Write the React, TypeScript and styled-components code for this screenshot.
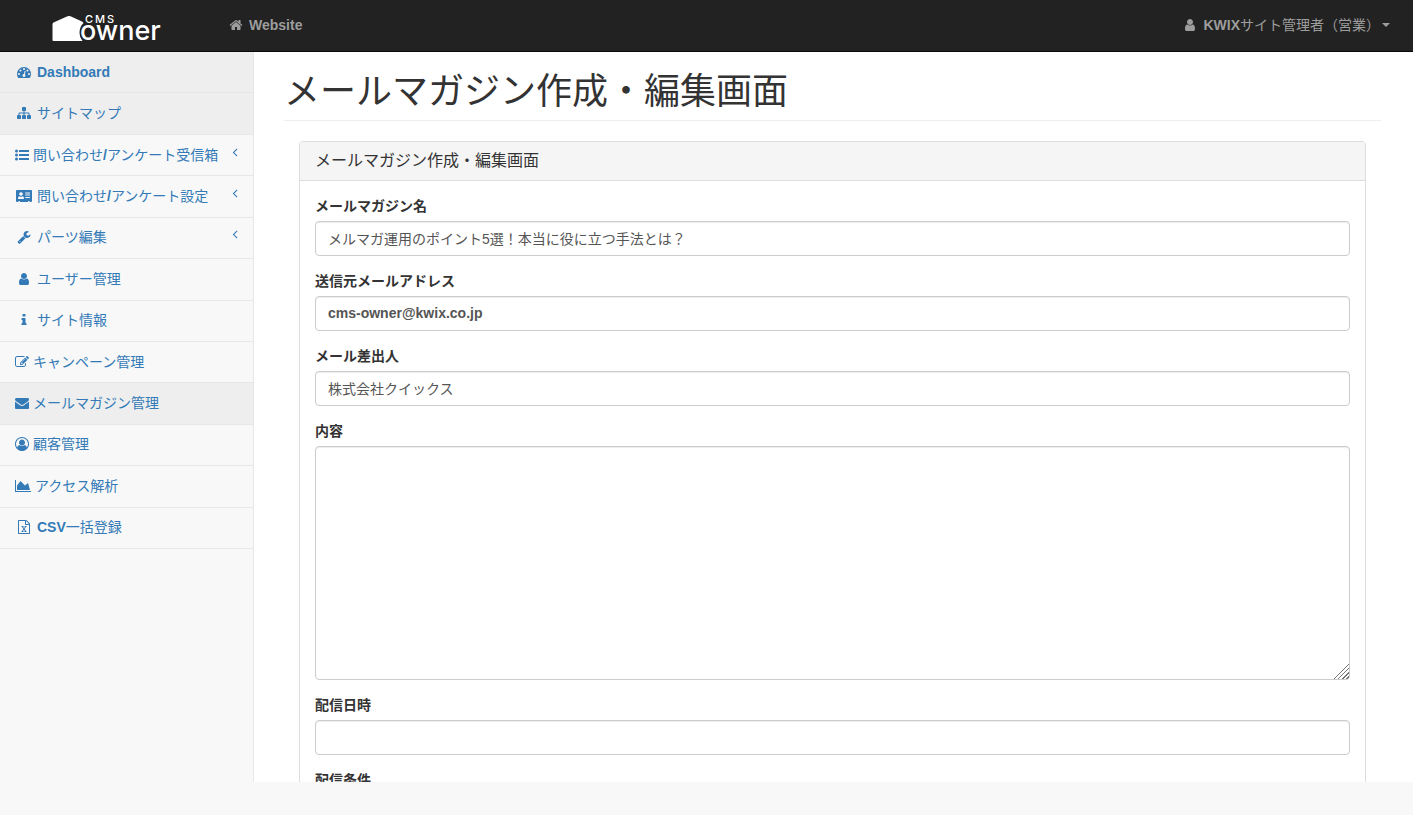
import React from "react";
import styled, { createGlobalStyle } from "styled-components";

const GlobalStyle = createGlobalStyle`
  *, *::before, *::after { box-sizing: border-box; }
  body {
    margin: 0;
    background: #f8f8f8;
    color: #333;
    font-family: "Liberation Sans", "Noto Sans CJK JP", sans-serif;
    font-size: 14px;
    line-height: 20px;
  }
  a { text-decoration: none; }
`;

const paths = {
  home: "M1472 992v480q0 26-19 45t-45 19h-384v-384h-256v384h-384q-26 0-45-19t-19-45v-480q0-1 .5-3t.5-3l575-474 575 474q1 2 1 6zm223-69l-62 74q-8 9-21 11h-3q-13 0-21-7l-692-577-692 577q-12 8-24 7-13-2-21-11l-62-74q-8-10-7-23.5t11-21.5l719-599q32-26 76-26t76 26l244 204v-195q0-14 9-23t23-9h192q14 0 23 9t9 23v408l219 182q10 8 11 21.5t-7 23.5z",
  user: "M1536 1399q0 109-62.5 187t-150.5 78h-854q-88 0-150.5-78t-62.5-187q0-85 8.5-160.5t31.5-152 58.5-131 94-89 134.5-34.5q131 128 313 128t313-128q76 0 134.5 34.5t94 89 58.5 131 31.5 152 8.5 160.5zm-256-887q0 159-112.5 271.5t-271.5 112.5-271.5-112.5-112.5-271.5 112.5-271.5 271.5-112.5 271.5 112.5 112.5 271.5z",
  gauge: "M384 1152q0-53-37.5-90.5t-90.5-37.5-90.5 37.5-37.5 90.5 37.5 90.5 90.5 37.5 90.5-37.5 37.5-90.5zm192-448q0-53-37.5-90.5t-90.5-37.5-90.5 37.5-37.5 90.5 37.5 90.5 90.5 37.5 90.5-37.5 37.5-90.5zm428 481l101-382q6-26-7.5-48.5t-38.5-29.5-48 6.5-30 39.5l-101 382q-60 5-107 43.5t-63 98.5q-20 77 20 146t117 89 146-20 89-117q16-60-6-117t-72-91zm660-33q0-53-37.5-90.5t-90.5-37.5-90.5 37.5-37.5 90.5 37.5 90.5 90.5 37.5 90.5-37.5 37.5-90.5zm-640-640q0-53-37.5-90.5t-90.5-37.5-90.5 37.5-37.5 90.5 37.5 90.5 90.5 37.5 90.5-37.5 37.5-90.5zm448 192q0-53-37.5-90.5t-90.5-37.5-90.5 37.5-37.5 90.5 37.5 90.5 90.5 37.5 90.5-37.5 37.5-90.5zm320 448q0 261-141 483-19 29-54 29h-1402q-35 0-54-29-141-221-141-483 0-182 71-348t191-286 286-191 348-71 348 71 286 191 191 286 71 348z",
  sitemap: "M1792 1248v320q0 40-28 68t-68 28h-320q-40 0-68-28t-28-68v-320q0-40 28-68t68-28h96v-192h-512v192h96q40 0 68 28t28 68v320q0 40-28 68t-68 28h-320q-40 0-68-28t-28-68v-320q0-40 28-68t68-28h96v-192h-512v192h96q40 0 68 28t28 68v320q0 40-28 68t-68 28h-320q-40 0-68-28t-28-68v-320q0-40 28-68t68-28h96v-192q0-52 38-90t90-38h512v-192h-96q-40 0-68-28t-28-68v-320q0-40 28-68t68-28h320q40 0 68 28t28 68v320q0 40-28 68t-68 28h-96v192h512q52 0 90 38t38 90v192h96q40 0 68 28t28 68z",
  list: "M0 384a192 192 0 1 0 384 0a192 192 0 1 0-384 0zM0 896a192 192 0 1 0 384 0a192 192 0 1 0-384 0zM0 1408a192 192 0 1 0 384 0a192 192 0 1 0-384 0zM512 288q0-32 32-32h1216q32 0 32 32v192q0 32-32 32h-1216q-32 0-32-32zM512 800q0-32 32-32h1216q32 0 32 32v192q0 32-32 32h-1216q-32 0-32-32zM512 1312q0-32 32-32h1216q32 0 32 32v192q0 32-32 32h-1216q-32 0-32-32z",
  card: "M0 256q0-128 112-128h1824q112 0 112 128v1280q0 128-112 128h-208v-96q0-32-32-32h-128q-32 0-32 32v96h-1024v-96q0-32-32-32h-128q-32 0-32 32v96h-208q-112 0-112-128zM256 1216q0 64 64 64h640q64 0 64-64 0-300-190-300-80 76-194 76t-194-76q-190 0-190 300zM640 400a232 232 0 1 0 1 0zM1184 448v128h608v-128zM1184 704v128h608v-128zM1184 1024v128h608v-128z",
  wrench: "M448 1472q0-26-19-45t-45-19-45 19-19 45 19 45 45 19 45-19 19-45zm644-420l-682 682q-37 37-90 37-52 0-91-37l-106-108q-38-36-38-90 0-53 38-91l681-681q39 98 114.5 173.5t173.5 114.5zm634-435q0 39-23 106-47 134-164.5 217.5t-258.5 83.5q-185 0-316.5-131.5t-131.5-316.5 131.5-316.5 316.5-131.5q58 0 121.5 16.5t107.5 46.5q16 11 16 28t-16 28l-293 169v224l193 107q5-3 79-48.5t135.5-81 70.5-35.5q15 0 23.5 10t8.5 25z",
  info: "M1216 1344v128q0 26-19 45t-45 19h-512q-26 0-45-19t-19-45v-128q0-26 19-45t45-19h64v-384h-64q-26 0-45-19t-19-45v-128q0-26 19-45t45-19h384q26 0 45 19t19 45v576h64q26 0 45 19t19 45zm-128-1152v192q0 26-19 45t-45 19h-256q-26 0-45-19t-19-45v-192q0-26 19-45t45-19h256q26 0 45 19t19 45z",
  edit: "M888 1184l116-116-152-152-116 116v56h96v96h56zm440-720q-16-16-33 1l-350 350q-17 17-1 33t33-1l350-350q17-17 1-33zm80 594v190q0 119-84.5 203.5t-203.5 84.5h-832q-119 0-203.5-84.5t-84.5-203.5v-832q0-119 84.5-203.5t203.5-84.5h832q63 0 117 25 15 7 18 23 3 17-9 29l-49 49q-14 14-32 8-23-6-45-6h-832q-66 0-113 47t-47 113v832q0 66 47 113t113 47h832q66 0 113-47t47-113v-126q0-13 9-22l64-64q15-15 35-7t20 29zm-96-738l288 288-672 672h-288v-288zm444 132l-92 92-288-288 92-92q28-28 68-28t68 28l152 152q28 28 28 68t-28 68z",
  envelope: "M1792 710v794q0 66-47 113t-113 47h-1472q-66 0-113-47t-47-113v-794q44 49 101 87 362 246 497 345 57 42 92.5 65.5t94.5 48 110 24.5h2q51 0 110-24.5t94.5-48 92.5-65.5q170-123 498-345 57-39 100-87zm0-294q0 79-49 151t-122 123q-376 261-468 325-10 7-42.5 30.5t-54 38-52 32.5-57.5 27-50 9h-2q-23 0-50-9t-57.5-27-52-32.5-54-38-42.5-30.5q-91-64-262-182.5t-205-142.5q-62-42-117-115.5t-55-136.5q0-78 41.5-130t118.5-52h1472q65 0 112.5 47t47.5 113z",
  userCircle: "M896 0q182 0 348 71t286 191 191 286 71 348q0 181-70.5 347t-190.5 286-286 191.5-349 71.5-349-71-285.5-191.5-190.5-286-71-347.5 71-348 191-286 286-191 348-71zm619 1351q149-205 149-455 0-156-61-298t-164-245-245-164-298-61-298 61-245 164-164 245-61 298q0 250 149 455 66-327 306-327 131 128 313 128t313-128q240 0 306 327zm-235-647q0-159-112.5-271.5t-271.5-112.5-271.5 112.5-112.5 271.5 112.5 271.5 271.5 112.5 271.5-112.5 112.5-271.5z",
  chart: "M2048 1536v128h-2048v-1536h128v1408h1920zm-384-1024l256 896h-1664v-576l448-576 576 576z",
  excel: "M1596 380q28 28 48 76t20 88v1152q0 40-28 68t-68 28h-1344q-40 0-68-28t-28-68v-1600q0-40 28-68t68-28h896q40 0 88 20t76 48zm-444-244v376h376q-10-29-22-41l-313-313q-12-12-41-22zm384 1528v-1024h-416q-40 0-68-28t-28-68v-416h-768v1536h1280zm-979-234v106h281v-106h-75l103-161q5-7 10-16.5t7.5-13.5 3.5-4h2q1 4 5 10 2 4 4.5 7.5t6 8 6.5 8.5l107 161h-76v106h291v-106h-68l-192-273 195-282h67v-107h-279v107h74l-103 159q-4 7-10 16.5t-9 13.5l-2 3h-2q-1-4-5-10-6-11-17-23l-106-159h76v-107h-290v107h68l189 272-194 283h-68z",
  angleLeft: "M1203 544q0 13-10 23l-393 393 393 393q10 10 10 23t-10 23l-50 50q-10 10-23 10t-23-10l-466-466q-10-10-10-23t10-23l466-466q10-10 23-10t23 10l50 50q10 10 10 23z",
};

type IconName = keyof typeof paths;

const IconBox = styled.span<{ $fixed?: boolean }>`
  display: inline-flex;
  flex: none;
  justify-content: center;
  width: ${(p) => (p.$fixed ? "18px" : "auto")};
`;

const Glyph = styled.svg`
  display: block;
  height: 14px;
  fill: currentColor;
`;

function Icon({ name, fixed }: { name: IconName; fixed?: boolean }) {
  const wide = name === "chart" || name === "card";
  return (
    <IconBox $fixed={fixed}>
      <Glyph
        width={wide ? 16 : 14}
        viewBox={wide ? "0 0 2048 1792" : "0 0 1792 1792"}
        fillRule={name === "card" ? "evenodd" : "nonzero"}
        aria-hidden="true"
      >
        <path d={paths[name]} />
      </Glyph>
    </IconBox>
  );
}

const Latin = styled.b`
  font-weight: 700;
`;

/* Latin runs are set bold next to regular-weight Japanese. */
function Mixed({ text }: { text: string }) {
  return (
    <span>
      {text
        .split(/([\x21-\x7e]+)/)
        .filter(Boolean)
        .map((part, i) => (/^[\x21-\x7e]/.test(part) ? <Latin key={i}>{part}</Latin> : part))}
    </span>
  );
}

const Page = styled.div`
  display: flex;
  flex-direction: column;
  height: 100vh;
  padding-bottom: 33px;
`;

const Navbar = styled.header`
  display: flex;
  flex: none;
  align-items: center;
  height: 52px;
  padding: 0 23px 1px 52px;
  background: #222;
  border-bottom: 1px solid #090909;
`;

const Brand = styled.a`
  display: block;
  width: 112px;
  height: 40px;
  margin-right: 65px;
`;

const LogoSvg = styled.svg`
  display: block;
  fill: #fff;
  font-family: Inter, sans-serif;
`;

const IconText = styled.span`
  display: flex;
  align-items: center;
  gap: 6px;
`;

const NavLink = styled.a`
  color: #9d9d9d;
`;

const UserMenu = styled.button`
  display: flex;
  align-items: center;
  gap: 2px;
  margin-left: auto;
  padding: 0;
  border: 0;
  background: none;
  color: #9d9d9d;
  font: inherit;
  cursor: pointer;
`;

const Caret = styled.span`
  border-top: 4px solid currentColor;
  border-left: 4px solid transparent;
  border-right: 4px solid transparent;
`;

const Body = styled.div`
  display: flex;
  flex: 1;
  min-height: 0;
`;

const Sidebar = styled.nav`
  flex: none;
  width: 254px;
  border-right: 1px solid #e7e7e7;
`;

const Menu = styled.ul`
  display: grid;
  grid-auto-rows: 1fr;
  height: 497px;
  margin: 0;
  padding: 0;
  list-style: none;
`;

const MenuItem = styled.li`
  display: flex;
  border-bottom: 1px solid #e7e7e7;
`;

const MenuLink = styled.a<{ $active?: boolean }>`
  display: flex;
  flex: 1;
  align-items: center;
  gap: 4px;
  padding: 0 11px 1px 15px;
  background: ${(p) => (p.$active ? "#eee" : "transparent")};
  color: #337ab7;
`;

const Arrow = styled.span`
  margin: 0 0 2px auto;
`;

const Content = styled.main`
  flex: 1;
  min-width: 0;
  overflow: auto;
  scrollbar-width: none;
  padding: 0 32px 0 30px;
  background: #fff;
`;

const Title = styled.h1`
  margin: 0 0 20px;
  padding: 20px 0 8px;
  border-bottom: 1px solid #eee;
  font-size: 36px;
  font-weight: 400;
  line-height: 40px;
`;

const Panel = styled.section`
  margin: 0 15px 20px;
  border: 1px solid #ddd;
  border-radius: 4px;
`;

const PanelHeading = styled.h2`
  margin: 0;
  padding: 9px 15px;
  border-bottom: 1px solid #ddd;
  border-radius: 3px 3px 0 0;
  background: #f5f5f5;
  font-size: 16px;
  font-weight: 400;
  line-height: 20px;
`;

const Form = styled.form`
  display: grid;
  gap: 15px;
  padding: 15px;
`;

const Field = styled.div`
  display: grid;
  gap: 5px;
`;

const Label = styled.label`
  font-weight: 700;
`;

const Input = styled.input<{ $strong?: boolean }>`
  width: 100%;
  height: 35px;
  padding: 5px 12px 7px;
  border: 1px solid #ccc;
  border-radius: 4px;
  background: #fff;
  box-shadow: inset 0 1px 1px rgba(0, 0, 0, 0.075);
  color: #555;
  font: inherit;
  font-weight: ${(p) => (p.$strong ? 700 : 400)};
`;

const TextArea = styled.textarea`
  display: block;
  width: 100%;
  height: 234px;
  padding: 6px 12px;
  border: 1px solid #ccc;
  border-radius: 4px;
  background: #fff;
  box-shadow: inset 0 1px 1px rgba(0, 0, 0, 0.075);
  color: #555;
  font: inherit;
  resize: vertical;

  &::-webkit-resizer {
    background: linear-gradient(
      135deg,
      transparent 10px,
      #777 10px 11px,
      transparent 11px 13px,
      #777 13px 14px,
      transparent 14px 16px,
      #777 16px 17px,
      transparent 17px 19px,
      #777 19px 20px,
      transparent 20px
    );
  }
`;

function Logo() {
  return (
    <LogoSvg width="112" height="40" viewBox="0 0 112 40" role="img" aria-label="CMS owner">
      <path d="M.5 19.500Q.5 18 1.500 17.500L15.500 11.300Q17 10.600 18.500 11.300L30 16.500Q31 17 31.500 18Q27.500 21.500 27.500 28Q27.500 32.500 30.500 36H1.500Q.5 36 .5 35Z" />
      <text x="33" y="18" fontSize="11" fontWeight="500" letterSpacing="2">
        CMS
      </text>
      <text x="28" y="35" fontSize="27" fontWeight="500">
        owner
      </text>
    </LogoSvg>
  );
}

const menu: { icon: IconName; text: string; fixed?: boolean; active?: boolean; sub?: boolean }[] = [
  { icon: "gauge", text: "Dashboard", fixed: true, active: true },
  { icon: "sitemap", text: "サイトマップ", fixed: true, active: true },
  { icon: "list", text: "問い合わせ/アンケート受信箱", sub: true },
  { icon: "card", text: "問い合わせ/アンケート設定", fixed: true, sub: true },
  { icon: "wrench", text: "パーツ編集", fixed: true, sub: true },
  { icon: "user", text: "ユーザー管理", fixed: true },
  { icon: "info", text: "サイト情報", fixed: true },
  { icon: "edit", text: "キャンペーン管理" },
  { icon: "envelope", text: "メールマガジン管理", active: true },
  { icon: "userCircle", text: "顧客管理" },
  { icon: "chart", text: "アクセス解析" },
  { icon: "excel", text: "CSV一括登録", fixed: true },
];

export default function App() {
  return (
    <>
      <GlobalStyle />
      <Page>
        <Navbar>
          <Brand href="#">
            <Logo />
          </Brand>
          <NavLink href="#">
            <IconText>
              <Icon name="home" />
              <Mixed text="Website" />
            </IconText>
          </NavLink>
          <UserMenu type="button">
            <IconText>
              <Icon name="user" />
              <Mixed text="KWIXサイト管理者（営業）" />
            </IconText>
            <Caret />
          </UserMenu>
        </Navbar>
        <Body>
          <Sidebar>
            <Menu>
              {menu.map((item) => (
                <MenuItem key={item.text}>
                  <MenuLink href="#" $active={item.active}>
                    <Icon name={item.icon} fixed={item.fixed} />
                    <Mixed text={item.text} />
                    {item.sub && (
                      <Arrow>
                        <Icon name="angleLeft" />
                      </Arrow>
                    )}
                  </MenuLink>
                </MenuItem>
              ))}
            </Menu>
          </Sidebar>
          <Content>
            <Title>メールマガジン作成・編集画面</Title>
            <Panel>
              <PanelHeading>メールマガジン作成・編集画面</PanelHeading>
              <Form>
                <Field>
                  <Label htmlFor="name">メールマガジン名</Label>
                  <Input id="name" defaultValue="メルマガ運用のポイント5選！本当に役に立つ手法とは？" />
                </Field>
                <Field>
                  <Label htmlFor="from">送信元メールアドレス</Label>
                  <Input id="from" type="email" $strong defaultValue="cms-owner@kwix.co.jp" />
                </Field>
                <Field>
                  <Label htmlFor="sender">メール差出人</Label>
                  <Input id="sender" defaultValue="株式会社クイックス" />
                </Field>
                <Field>
                  <Label htmlFor="body">内容</Label>
                  <TextArea id="body" />
                </Field>
                <Field>
                  <Label htmlFor="date">配信日時</Label>
                  <Input id="date" />
                </Field>
                <Field>
                  <Label htmlFor="condition">配信条件</Label>
                  <Input id="condition" />
                </Field>
              </Form>
            </Panel>
          </Content>
        </Body>
      </Page>
    </>
  );
}
